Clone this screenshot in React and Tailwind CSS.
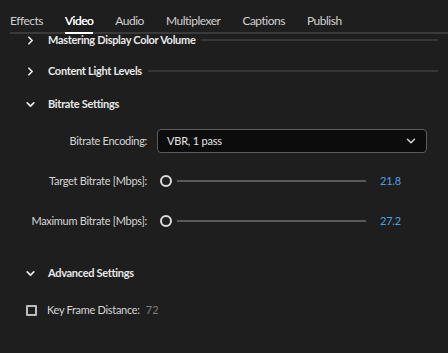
import React from 'react';
import { ChevronRight, ChevronDown } from 'lucide-react';

const tabs = ['Effects', 'Video', 'Audio', 'Multiplexer', 'Captions', 'Publish'];

const SectionHeader = ({ title, open, line, className = '' }) => (
  <div className={`flex items-center h-[32px] ${className}`}>
    <div className="w-[48px] flex items-center pl-[24px]">
      {open ? (
        <ChevronDown size={13} strokeWidth={3.2} className="text-[#e8e8e8]" />
      ) : (
        <ChevronRight size={13} strokeWidth={3.2} className="text-[#e8e8e8]" />
      )}
    </div>
    <span className="font-bold text-[11px] tracking-[-0.3px] text-[#e8e8e8] whitespace-nowrap">{title}</span>
    {line && <div className="ml-[6px] mr-[10px] flex-1 h-[2px] bg-[#363636]" />}
  </div>
);

const SliderRow = ({ label, value }) => (
  <div className="flex items-center h-[40px]">
    <div className="w-[147px] text-right text-[11px] tracking-[-0.3px] text-[#d6d6d6] whitespace-nowrap">{label}</div>
    <div className="ml-[13px] w-[12px] h-[12px] rounded-full border-2 border-[#dcdcdc]" />
    <div className="ml-[5px] w-[189px] h-[2px] bg-[#5a5a5a]" />
    <div className="ml-[14px] text-[11px] tracking-[-0.2px] text-[#4ba0e4]">{value}</div>
  </div>
);

export default function App() {
  return (
    <div className="w-[448px] h-[353px] bg-[#1e1e1e] overflow-hidden" style={{ fontFamily: 'Lato, "Open Sans", sans-serif' }}>
      {/* tab strip */}
      <div className="ml-[10px] flex gap-[22px] border-b-2 border-[#3a3a3a] h-[34px] items-end">
        {tabs.map((t) => (
          <div
            key={t}
            className={`pb-[3px] -mb-[2px] text-[12px] leading-[16px] tracking-[-0.5px] border-b-2 ${
              t === 'Video' ? 'border-white text-white [text-shadow:0_0_0.4px_#fff]' : 'border-transparent text-[#d0d0d0]'
            }`}
          >
            {t}
          </div>
        ))}
      </div>

      {/* scrolled panel */}
      <div className="h-[319px] overflow-hidden">
        <div className="-mt-[10px]">
          <SectionHeader title="Mastering Display Color Volume" line />
          <SectionHeader title="Content Light Levels" line className="-mt-px" />
          <SectionHeader title="Bitrate Settings" open className="h-[34px]" />

          <div className="flex items-center h-[40px]">
            <div className="w-[147px] text-right text-[11px] tracking-[-0.3px] text-[#d6d6d6]">Bitrate Encoding:</div>
            <div className="ml-[10px] w-[270px] h-[24px] rounded-[4px] border border-[#5c5c5c] bg-[#0c0c0c] flex items-center justify-between pl-[9px] pr-[8px]">
              <span className="text-[11px] tracking-[-0.2px] text-[#e6e6e6]">VBR, 1 pass</span>
              <ChevronDown size={14} strokeWidth={2.5} className="text-[#d8d8d8]" />
            </div>
          </div>

          <SliderRow label="Target Bitrate [Mbps]:" value="21.8" />
          <SliderRow label="Maximum Bitrate [Mbps]:" value="27.2" />

          <SectionHeader title="Advanced Settings" open className="mt-[16px]" />

          <div className="flex items-center h-[32px] mt-[5px]">
            <div className="ml-[26px] w-[11px] h-[11px] border-2 border-[#bcbcbc] rounded-[1px]" />
            <span className="ml-[10px] text-[11px] tracking-[-0.3px] text-[#d6d6d6]">Key Frame Distance:</span>
            <span className="ml-[6px] text-[11px] text-[#7c7c7c]">72</span>
          </div>
        </div>
      </div>
    </div>
  );
}
